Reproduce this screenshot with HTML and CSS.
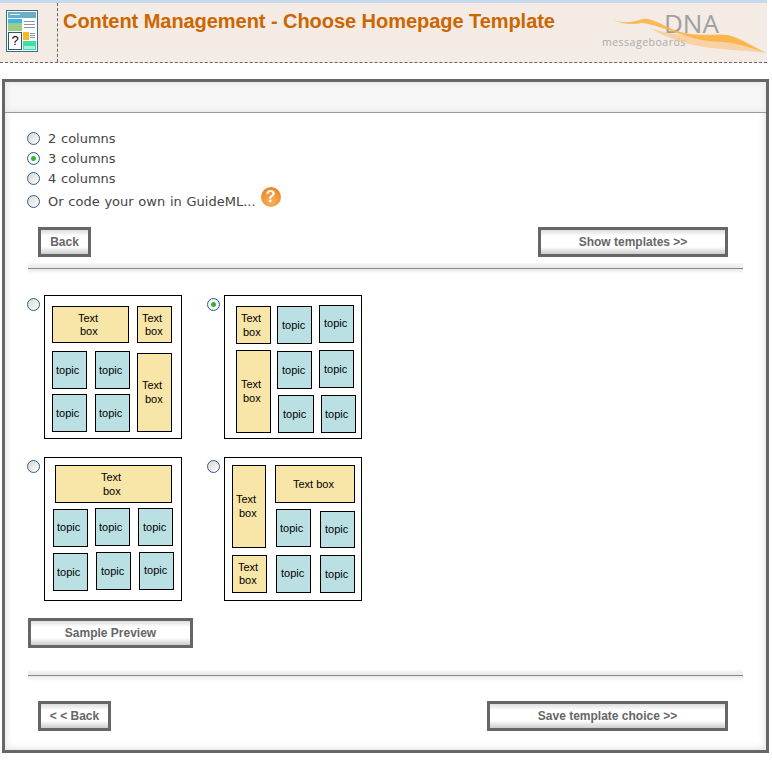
FILE: index.html
```html
<!DOCTYPE html>
<html lang="en">
<head>
  <meta charset="UTF-8" />
  <title>Content Management - Choose Homepage Template</title>
  <link rel="stylesheet" href="styles.css">
</head>
<body>

<!-- Page title bar -->
<header class="topbar">
  <div class="topbar-icon">
    <svg width="32" height="42" viewBox="6 10 32 42">
      <rect x="6.5" y="10.5" width="31" height="41" fill="#fff" stroke="#3a6f82" />
      <rect x="8" y="12" width="28" height="6" fill="#6aaec8" />
      <rect x="10" y="14" width="10" height="1" fill="#e4f2f8" />
      <rect x="8" y="19" width="14" height="4" fill="#3db5ea" />
      <rect x="8" y="23" width="14" height="8" fill="#9ccc88" />
      <path d="M24 21.5h11M24 24.5h11M24 27.5h11M30 33.5h5M30 35.5h5M30 37.5h5" stroke="#8a9a9e" />
      <rect x="8.5" y="32.5" width="13" height="17" fill="#fff" stroke="#2f5a6a" />
      <text class="icon-q" x="15" y="45">?</text>
      <rect x="23" y="32" width="6" height="8" fill="#fbb82a" />
      <rect x="23" y="41" width="13" height="9" fill="#3de0a8" />
      <rect x="24" y="46" width="11" height="3" fill="#a8efd4" />
    </svg>
  </div>
  <h1>Content Management - Choose Homepage Template</h1>
  <svg class="logo" width="165" height="59" viewBox="602 3 165 59">
    <text class="logo-dna" x="664" y="33">DNA</text>
    <text class="logo-sub" x="602" y="46">messageboards</text>
    <path d="M650 28C670 40 690 45 705 47C722 50 742 50 766 53C750 44 738 36 726 35C705 36 680 38 650 28Z" fill="#f9c88a" opacity="0.7" />
    <path d="M613 20C625 24 634 22 642 19C652 17 660 25 680 32C700 37 715 33 728 35C738 38 748 44 766 53C752 48 738 43 722 42C706 42 692 38 680 34C668 30 652 24 642 23C632 25 622 24 613 20Z" fill="#fbb040" opacity="0.85" />
  </svg>
</header>

<main class="panel">
  <div class="panel-head"></div>

  <div class="panel-body">
    <form class="columns">
      <label class="col-row"><input type="radio" name="cols" /> 2 columns</label>
      <label class="col-row"><input type="radio" name="cols" checked /> 3 columns</label>
      <label class="col-row"><input type="radio" name="cols" /> 4 columns</label>
      <label class="col-row col-row-last"><input type="radio" name="cols" /> Or code your own in GuideML...
        <span class="help">?</span>
      </label>
    </form>

    <div class="btn-row btn-row-top">
      <button class="btn btn-back" type="button">Back</button>
      <button class="btn btn-show" type="button">Show templates &gt;&gt;</button>
    </div>

    <div class="divider divider-top"></div>

    <div class="templates">
      <div class="template">
        <input type="radio" name="tpl" />
        <svg class="thumb" width="138" height="144" viewBox="0 0 138 144">
          <rect class="frame" x="0.5" y="0.5" width="137" height="143" />
          <rect class="tb" x="8.5" y="11.5" width="76" height="36" />
          <text x="34" y="27">Text</text><text x="36" y="40">box</text>
          <rect class="tb" x="93.5" y="11.5" width="34" height="36" />
          <text x="98" y="27">Text</text><text x="101" y="40">box</text>
          <rect class="tp" x="8.5" y="56.5" width="34" height="37" />
          <text x="12" y="79">topic</text>
          <rect class="tp" x="51.5" y="56.5" width="34" height="37" />
          <text x="55" y="79">topic</text>
          <rect class="tp" x="8.5" y="99.5" width="34" height="37" />
          <text x="12" y="122">topic</text>
          <rect class="tp" x="51.5" y="99.5" width="34" height="37" />
          <text x="55" y="122">topic</text>
          <rect class="tb" x="93.5" y="58.5" width="34" height="78" />
          <text x="98" y="94">Text</text><text x="101" y="108">box</text>
        </svg>
      </div>

      <div class="template">
        <input type="radio" name="tpl" checked />
        <svg class="thumb" width="138" height="144" viewBox="0 0 138 144">
          <rect class="frame" x="0.5" y="0.5" width="137" height="143" />
          <rect class="tb" x="12.5" y="11.5" width="34" height="37" />
          <text x="17" y="27">Text</text><text x="19" y="41">box</text>
          <rect class="tb" x="12.5" y="55.5" width="34" height="82" />
          <text x="17" y="93">Text</text><text x="19" y="107">box</text>
          <rect class="tp" x="53.5" y="11.5" width="34" height="37" />
          <text x="58" y="34">topic</text>
          <rect class="tp" x="95.5" y="10.5" width="34" height="37" />
          <text x="100" y="32">topic</text>
          <rect class="tp" x="53.5" y="56.5" width="34" height="37" />
          <text x="58" y="79">topic</text>
          <rect class="tp" x="95.5" y="55.5" width="34" height="37" />
          <text x="100" y="78">topic</text>
          <rect class="tp" x="54.5" y="100.5" width="35" height="37" />
          <text x="59" y="123">topic</text>
          <rect class="tp" x="97.5" y="100.5" width="34" height="37" />
          <text x="101" y="123">topic</text>
        </svg>
      </div>

      <div class="template">
        <input type="radio" name="tpl" />
        <svg class="thumb" width="138" height="144" viewBox="0 0 138 144">
          <rect class="frame" x="0.5" y="0.5" width="137" height="143" />
          <rect class="tb" x="11.5" y="8.5" width="116" height="37" />
          <text x="57" y="24">Text</text><text x="59" y="38">box</text>
          <rect class="tp" x="9.5" y="52.5" width="34" height="37" />
          <text x="13" y="74">topic</text>
          <rect class="tp" x="51.5" y="51.5" width="34" height="37" />
          <text x="55" y="74">topic</text>
          <rect class="tp" x="94.5" y="51.5" width="34" height="37" />
          <text x="99" y="74">topic</text>
          <rect class="tp" x="9.5" y="96.5" width="34" height="37" />
          <text x="13" y="119">topic</text>
          <rect class="tp" x="52.5" y="95.5" width="34" height="37" />
          <text x="57" y="118">topic</text>
          <rect class="tp" x="95.5" y="95.5" width="34" height="37" />
          <text x="100" y="117">topic</text>
        </svg>
      </div>

      <div class="template">
        <input type="radio" name="tpl" />
        <svg class="thumb" width="138" height="144" viewBox="0 0 138 144">
          <rect class="frame" x="0.5" y="0.5" width="137" height="143" />
          <rect class="tb" x="8.5" y="8.5" width="33" height="82" />
          <text x="12" y="46">Text</text><text x="15" y="60">box</text>
          <rect class="tb" x="51.5" y="8.5" width="79" height="37" />
          <text x="69" y="31">Text box</text>
          <rect class="tb" x="8.5" y="98.5" width="34" height="37" />
          <text x="14" y="114">Text</text><text x="15" y="127">box</text>
          <rect class="tp" x="52.5" y="52.5" width="34" height="37" />
          <text x="56" y="75">topic</text>
          <rect class="tp" x="96.5" y="54.5" width="34" height="36" />
          <text x="101" y="76">topic</text>
          <rect class="tp" x="52.5" y="98.5" width="34" height="37" />
          <text x="57" y="120">topic</text>
          <rect class="tp" x="96.5" y="98.5" width="34" height="37" />
          <text x="101" y="121">topic</text>
        </svg>
      </div>
    </div>

    <button class="btn btn-sample" type="button">Sample Preview</button>

    <div class="divider divider-bottom"></div>

    <div class="btn-row btn-row-bottom">
      <button class="btn btn-prev" type="button">&lt; &lt; Back</button>
      <button class="btn btn-save" type="button">Save template choice &gt;&gt;</button>
    </div>
  </div>
</main>

</body>
</html>
```

FILE: styles.css
```css
body {
  margin: 0;
  background: #fff;
  font-family: "DejaVu Sans", sans-serif;
  color: #444;
}

/* title bar */
.topbar {
  width: 767px;
  height: 63px;
  box-sizing: border-box;
  display: flex;
  background: #f3ebe4;
  border-top: 3px solid #c5d9ea;
  border-bottom: 1px dashed #666;
}

.topbar-icon {
  width: 58px;
  box-sizing: border-box;
  padding: 7px 0 0 6px;
  border-right: 1px dashed #666;
}

.topbar-icon svg {
  display: block;
}

.icon-q {
  font-family: "Liberation Sans", sans-serif;
  font-size: 13px;
  text-anchor: middle;
  fill: #000;
}

.topbar h1 {
  margin: 6px 0 0 5px;
  font-family: "Liberation Sans", sans-serif;
  font-size: 20px;
  font-weight: bold;
  line-height: 24px;
  letter-spacing: -0.05px;
  color: #cc6600;
  white-space: nowrap;
}

.logo {
  margin-left: auto;
  display: block;
}

.logo-dna {
  font-family: "Open Sans", sans-serif;
  font-size: 26px;
  fill: #a0a0a0;
}

.logo-sub {
  font-family: "Open Sans", sans-serif;
  font-size: 10.5px;
  letter-spacing: 0.5px;
  fill: #aaa;
}

/* main panel */
.panel {
  width: 767px;
  height: 674px;
  margin: 16px 0 0 2px;
  box-sizing: border-box;
  border: 3px solid #666;
  box-shadow: inset 0 0 6px 2px #e6e6e6;
}

.panel-head {
  height: 30px;
  background: #f7f7f7;
  border-bottom: 1px solid #999;
  box-shadow: inset 0 0 6px 1px #e6e6e6;
}

.panel-body {
  padding: 15px 23px 0;
}

.columns {
  margin: 0;
}

.col-row {
  height: 20px;
  display: flex;
  align-items: center;
  gap: 8px;
  margin-left: -1px;
  font-size: 13px;
  word-spacing: 0.6px;
}

.col-row-last {
  height: 24px;
  margin-top: 1px;
}

input[type="radio"] {
  appearance: none;
  width: 13px;
  height: 13px;
  margin: 0;
  flex: none;
  border: 1px solid #2c5f92;
  border-radius: 50%;
  background: linear-gradient(135deg, #d8d8d0, #fff);
}

input[type="radio"]:checked {
  background: radial-gradient(circle, #2fb52f 0, #2fb52f 2px, #fff 3px, #e4e4e4 100%);
}

.help {
  width: 20px;
  height: 20px;
  margin: -8px 0 0 -3px;
  border-radius: 50%;
  background: radial-gradient(circle at 50% 75%, #fab060, #e57c14);
  color: #fff;
  font-family: "Liberation Sans", sans-serif;
  font-size: 16px;
  font-weight: bold;
  line-height: 20px;
  text-align: center;
}

/* buttons */
.btn {
  height: 30px;
  padding: 0;
  box-sizing: border-box;
  border: 3px solid #666;
  background: linear-gradient(#ddd, #fff 25%, #fff 70%, #ccc);
  color: #666;
  font-family: "Liberation Sans", sans-serif;
  font-size: 12px;
  font-weight: bold;
  cursor: pointer;
}

.btn-row {
  display: flex;
  justify-content: space-between;
  padding: 0 15px 0 10px;
}

.btn-row-top {
  margin-top: 14px;
}

.btn-row-bottom {
  margin-top: 20px;
}

.btn-back {
  width: 53px;
}

.btn-show {
  width: 190px;
}

.btn-sample {
  display: block;
  width: 165px;
  margin-top: 17px;
}

.btn-prev {
  width: 73px;
}

.btn-save {
  width: 241px;
}

/* soft rule */
.divider {
  height: 11px;
  background: linear-gradient(#f8f8f8, #e8e8e8 45%, #888 45%, #888 55%, #e8e8e8 55%, #fff);
}

.divider-top {
  margin-top: 6px;
}

.divider-bottom {
  margin-top: 22px;
}

/* template choices */
.templates {
  display: grid;
  grid-template-columns: 180px 180px;
  row-gap: 18px;
  margin-top: 21px;
}

.template {
  display: flex;
  align-items: flex-start;
  gap: 4px;
  margin-left: -1px;
}

.template input {
  margin-top: 3px;
}

.thumb {
  display: block;
}

.thumb text {
  font-family: "Liberation Sans", sans-serif;
  font-size: 11px;
  fill: #000;
}

.frame {
  fill: #fff;
  stroke: #000;
}

.tb {
  fill: #f8e6a8;
  stroke: #000;
}

.tp {
  fill: #bbe0e3;
  stroke: #000;
}
```
